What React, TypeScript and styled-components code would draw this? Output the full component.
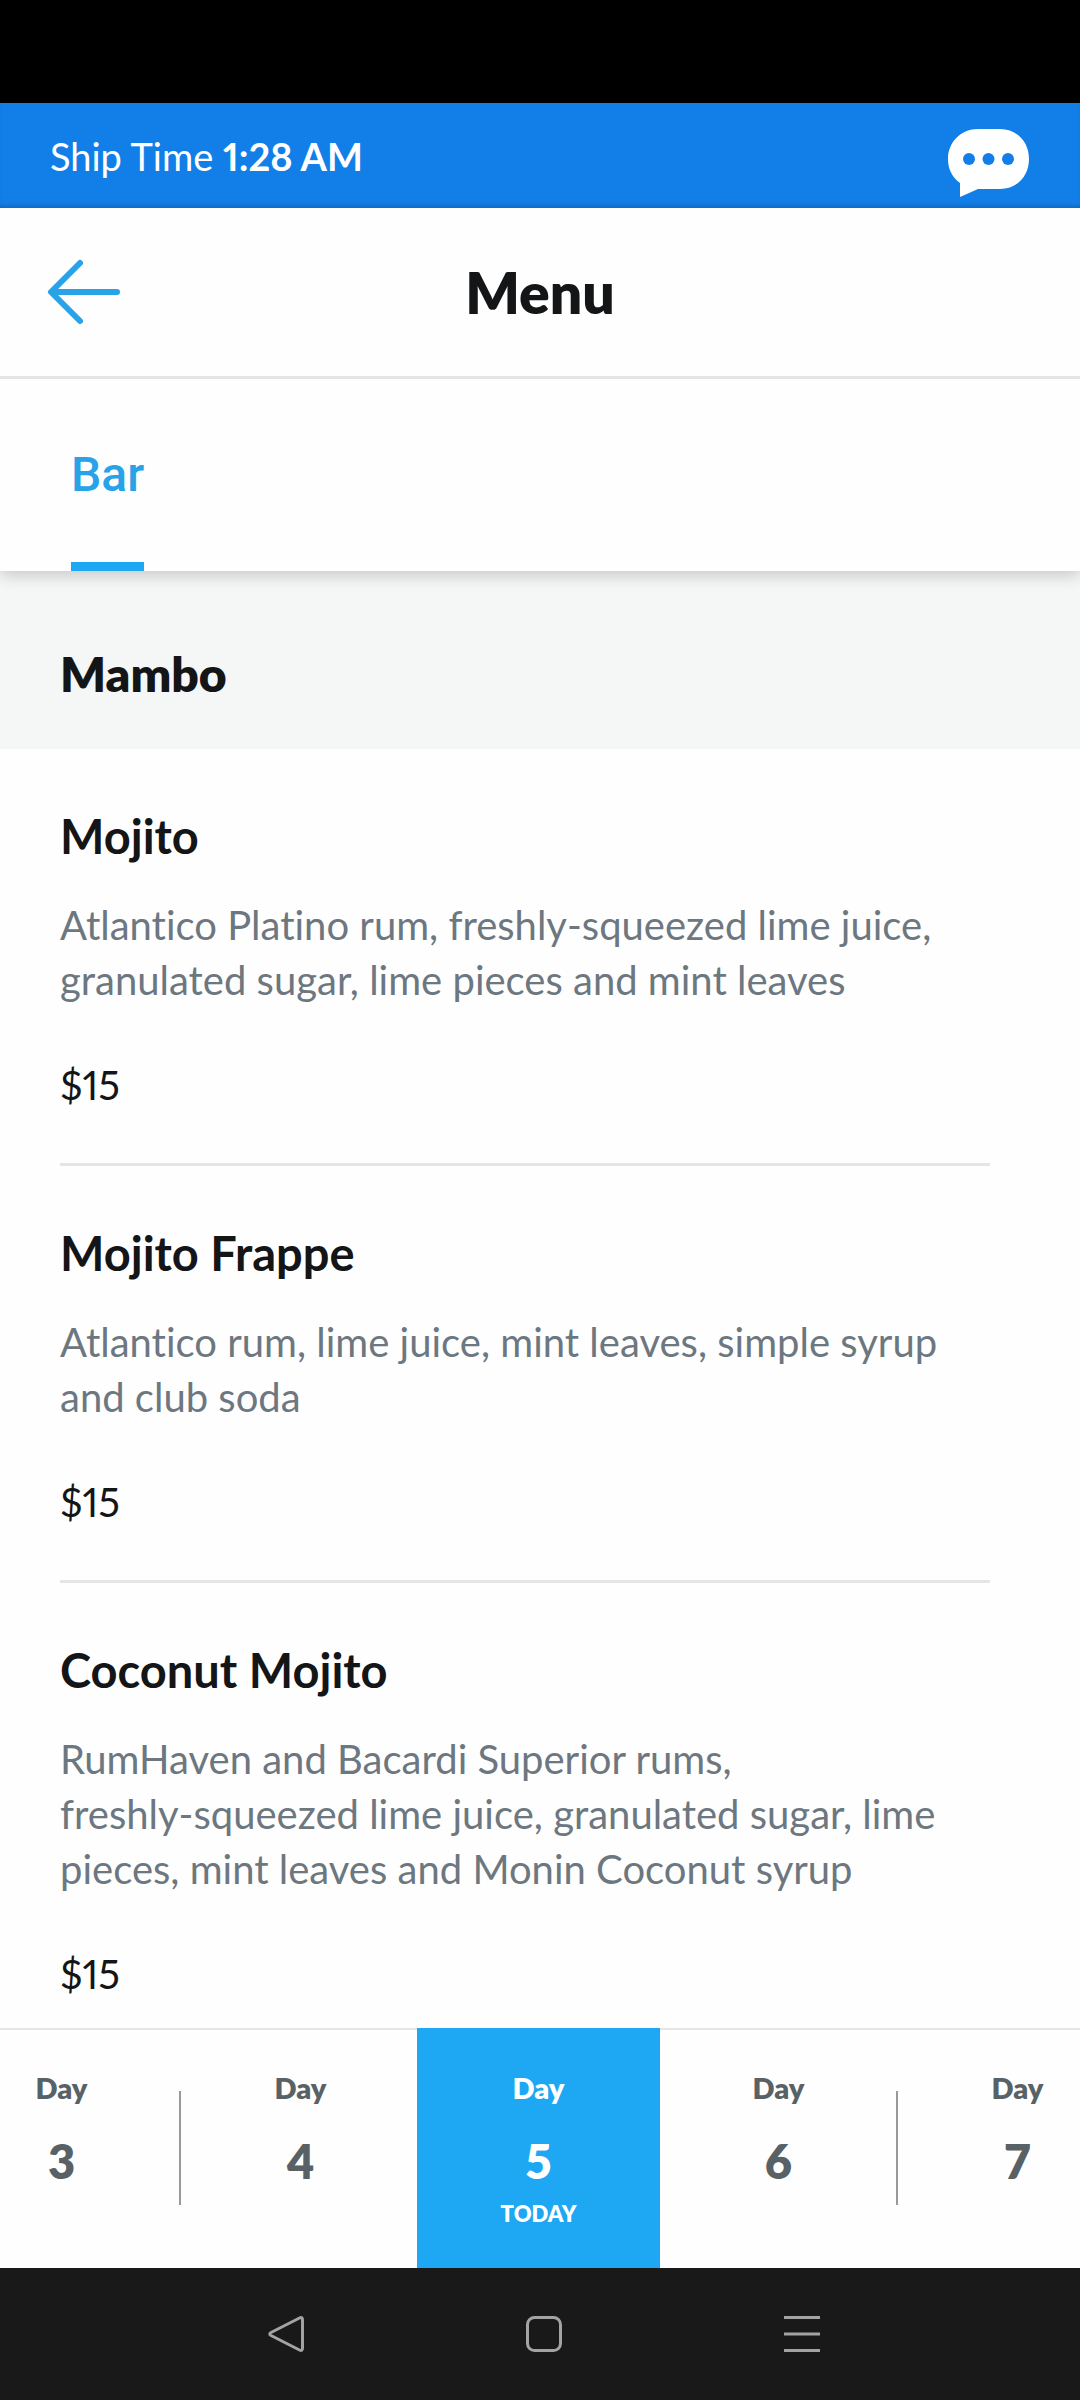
import React from "react";
import styled, { createGlobalStyle, css } from "styled-components";

const GlobalStyle = createGlobalStyle`
  *, *::before, *::after { box-sizing: border-box; }
  body { margin: 0; background: #fff; }
  button { margin: 0; padding: 0; border: 0; background: none; font: inherit; color: inherit; cursor: pointer; }
  h1, h2, h3, p, ul { margin: 0; padding: 0; }
  ul { list-style: none; }
  svg { display: block; }
`;

const Screen = styled.div`
  display: flex;
  flex-direction: column;
  height: 100vh;
  overflow: hidden;
  background: #fefefe;
  color: #141516;
  font-family: Lato, "Open Sans", sans-serif;
  font-variant-ligatures: none;
  font-variant-numeric: proportional-nums;
`;

const StatusBar = styled.div`
  flex: none;
  height: 103px;
  background: #000;
`;

const ShipBar = styled.div`
  flex: none;
  display: flex;
  align-items: center;
  justify-content: space-between;
  height: 105px;
  padding: 0 50px;
  background: #127fe8;
  color: #fff;
  font-size: 38px;
  line-height: 48px;
  box-shadow: inset 0 -5px 5px -3px rgba(0, 0, 0, 0.2);

  strong { font-weight: 700; }
`;

const ChatButton = styled.button`
  padding-top: 14px;
`;

const Header = styled.header`
  position: relative;
  z-index: 2;
  flex: none;
  display: grid;
  grid-template-columns: 1fr auto 1fr;
  align-items: center;
  height: 171px;
  padding: 0 46px;
  border-bottom: 3px solid #e4e5e5;
  background: #fefefe;
`;

const BackButton = styled.button`
  justify-self: start;
`;

const Title = styled.h1`
  font-size: 57px;
  font-weight: 800;
  line-height: 68px;
`;

const Tabs = styled.div`
  position: relative;
  z-index: 1;
  flex: none;
  display: flex;
  height: 192px;
  padding: 0 71px;
  background: #fefefe;
  box-shadow: 0 4px 16px rgba(0, 0, 0, 0.2);
`;

const Tab = styled.button`
  padding-top: 7px;
  border-bottom: 9px solid #1ea7f3;
  color: #28a3e8;
  font-family: Roboto, sans-serif;
  font-size: 48px;
  font-weight: 500;
`;

const MenuList = styled.main`
  flex: 1;
  min-height: 0;
  overflow-y: auto;
  scrollbar-width: none;
`;

const SectionTitle = styled.h2`
  display: flex;
  align-items: center;
  height: 178px;
  padding: 28px 60px 0;
  background: #f5f7f7;
  font-size: 48px;
  font-weight: 800;
  line-height: 56px;
`;

const Item = styled.li`
  margin: 0 90px 0 60px;
  padding: 59px 0 48px;
  border-bottom: 3px solid #e4e5e5;
`;

const ItemName = styled.h3`
  font-size: 47px;
  font-weight: 700;
  line-height: 56px;
`;

const Description = styled.p`
  margin: 34px 0 47px;
  color: #6c7780;
  font-size: 40px;
  line-height: 55px;
`;

const Price = styled.p`
  font-size: 40px;
  line-height: 60px;
`;

const DayStrip = styled.nav`
  flex: none;
  display: flex;
  justify-content: center;
  height: 240px;
  padding-right: 1px;
  overflow: hidden;
  background: #fefefe;
  box-shadow: inset 0 2px #e4e5e5;
`;

const DayButton = styled.button<{ $active?: boolean; $divided?: boolean }>`
  flex: 0 0 239px;
  display: flex;
  flex-direction: column;
  align-items: center;
  padding-top: 40px;
  color: #586165;
  font-weight: 800;

  ${({ $divided }) =>
    $divided &&
    css`
      background: linear-gradient(#979a9b, #979a9b) right 63px / 2px 114px no-repeat;
    `}

  ${({ $active }) =>
    $active &&
    css`
      flex-basis: 243px;
      margin: 0 -1px 0 -3px;
      background: #1ea7f3;
      color: #fff;
    `}
`;

const DayLabel = styled.span`
  font-size: 29px;
  line-height: 40px;
`;

const DayNumber = styled.span`
  margin-top: 25px;
  font-size: 47px;
  line-height: 56px;
`;

const TodayLabel = styled.span`
  margin-top: 9px;
  font-size: 22px;
  line-height: 32px;
`;

const SystemNav = styled.nav`
  flex: none;
  display: flex;
  align-items: center;
  justify-content: center;
  height: 132px;
  padding-left: 8px;
  background: #191919;
`;

const SystemButton = styled.button`
  flex: 0 0 258px;
  display: flex;
  justify-content: center;
`;

const ChatIcon = () => (
  <svg width="82" height="68" viewBox="0 0 82 68" aria-hidden="true">
    <path
      fill="#fff"
      d="M30 0H52C69 0 81 13 81 30S69 60 52 60H30L12 68V54C4 48 0 40 0 30C0 13 13 0 30 0Z"
    />
    <g fill="#127fe8">
      <circle cx="21" cy="30" r="6" />
      <circle cx="40.500" cy="30" r="6" />
      <circle cx="60" cy="30" r="6" />
    </g>
  </svg>
);

const BackIcon = () => (
  <svg width="76" height="70" viewBox="0 0 76 70" fill="none" stroke="#28a3e8" strokeWidth="6" strokeLinecap="round" strokeLinejoin="round" aria-hidden="true">
    <path d="M34 6L5 35L34 64M6 35H71" />
  </svg>
);

const SystemIcon = ({ children }: { children: React.ReactNode }) => (
  <svg width="40" height="40" viewBox="0 0 40 40" fill="none" stroke="#a3a3a3" strokeWidth="3" strokeLinejoin="round" aria-hidden="true">
    {children}
  </svg>
);

const drinks = [
  {
    name: "Mojito",
    description: "Atlantico Platino rum, freshly-squeezed lime juice, granulated sugar, lime pieces and mint leaves",
    price: "$15",
  },
  {
    name: "Mojito Frappe",
    description: "Atlantico rum, lime juice, mint leaves, simple syrup and club soda",
    price: "$15",
  },
  {
    name: "Coconut Mojito",
    description:
      "RumHaven and Bacardi Superior rums, freshly-squeezed lime juice, granulated sugar, lime pieces, mint leaves and Monin Coconut syrup",
    price: "$15",
  },
];

// A word joiner after each hyphen keeps hyphenated words on one line.
const keepHyphenated = (text: string) => text.replace(/-/g, "-\u2060");

const days = [
  { number: 3, divided: true },
  { number: 4 },
  { number: 5, today: true },
  { number: 6, divided: true },
  { number: 7 },
];

export default function App() {
  return (
    <Screen>
      <GlobalStyle />
      <StatusBar />
      <ShipBar>
        <span>
          Ship Time <strong>1:28 AM</strong>
        </span>
        <ChatButton aria-label="Chat">
          <ChatIcon />
        </ChatButton>
      </ShipBar>
      <Header>
        <BackButton aria-label="Back">
          <BackIcon />
        </BackButton>
        <Title>Menu</Title>
      </Header>
      <Tabs role="tablist">
        <Tab role="tab" aria-selected="true">
          Bar
        </Tab>
      </Tabs>
      <MenuList>
        <SectionTitle>Mambo</SectionTitle>
        <ul>
          {drinks.map((drink) => (
            <Item key={drink.name}>
              <ItemName>{drink.name}</ItemName>
              <Description>{keepHyphenated(drink.description)}</Description>
              <Price>{drink.price}</Price>
            </Item>
          ))}
        </ul>
      </MenuList>
      <DayStrip aria-label="Cruise days">
        {days.map((day) => (
          <DayButton key={day.number} $active={day.today} $divided={day.divided}>
            <DayLabel>Day</DayLabel>
            <DayNumber>{day.number}</DayNumber>
            {day.today && <TodayLabel>TODAY</TodayLabel>}
          </DayButton>
        ))}
      </DayStrip>
      <SystemNav aria-label="System">
        <SystemButton aria-label="Go back">
          <SystemIcon>
            <path d="M33.500 4Q36.500 2.500 36.500 6V34Q36.500 37.500 33.500 36L5 21.500Q2.500 20 5 18.500Z" />
          </SystemIcon>
        </SystemButton>
        <SystemButton aria-label="Home">
          <SystemIcon>
            <rect x="3.500" y="3.500" width="33" height="33" rx="7" />
          </SystemIcon>
        </SystemButton>
        <SystemButton aria-label="Recent apps">
          <SystemIcon>
            <path d="M2 3.500H38M2 20H38M2 36.500H38" />
          </SystemIcon>
        </SystemButton>
      </SystemNav>
    </Screen>
  );
}
